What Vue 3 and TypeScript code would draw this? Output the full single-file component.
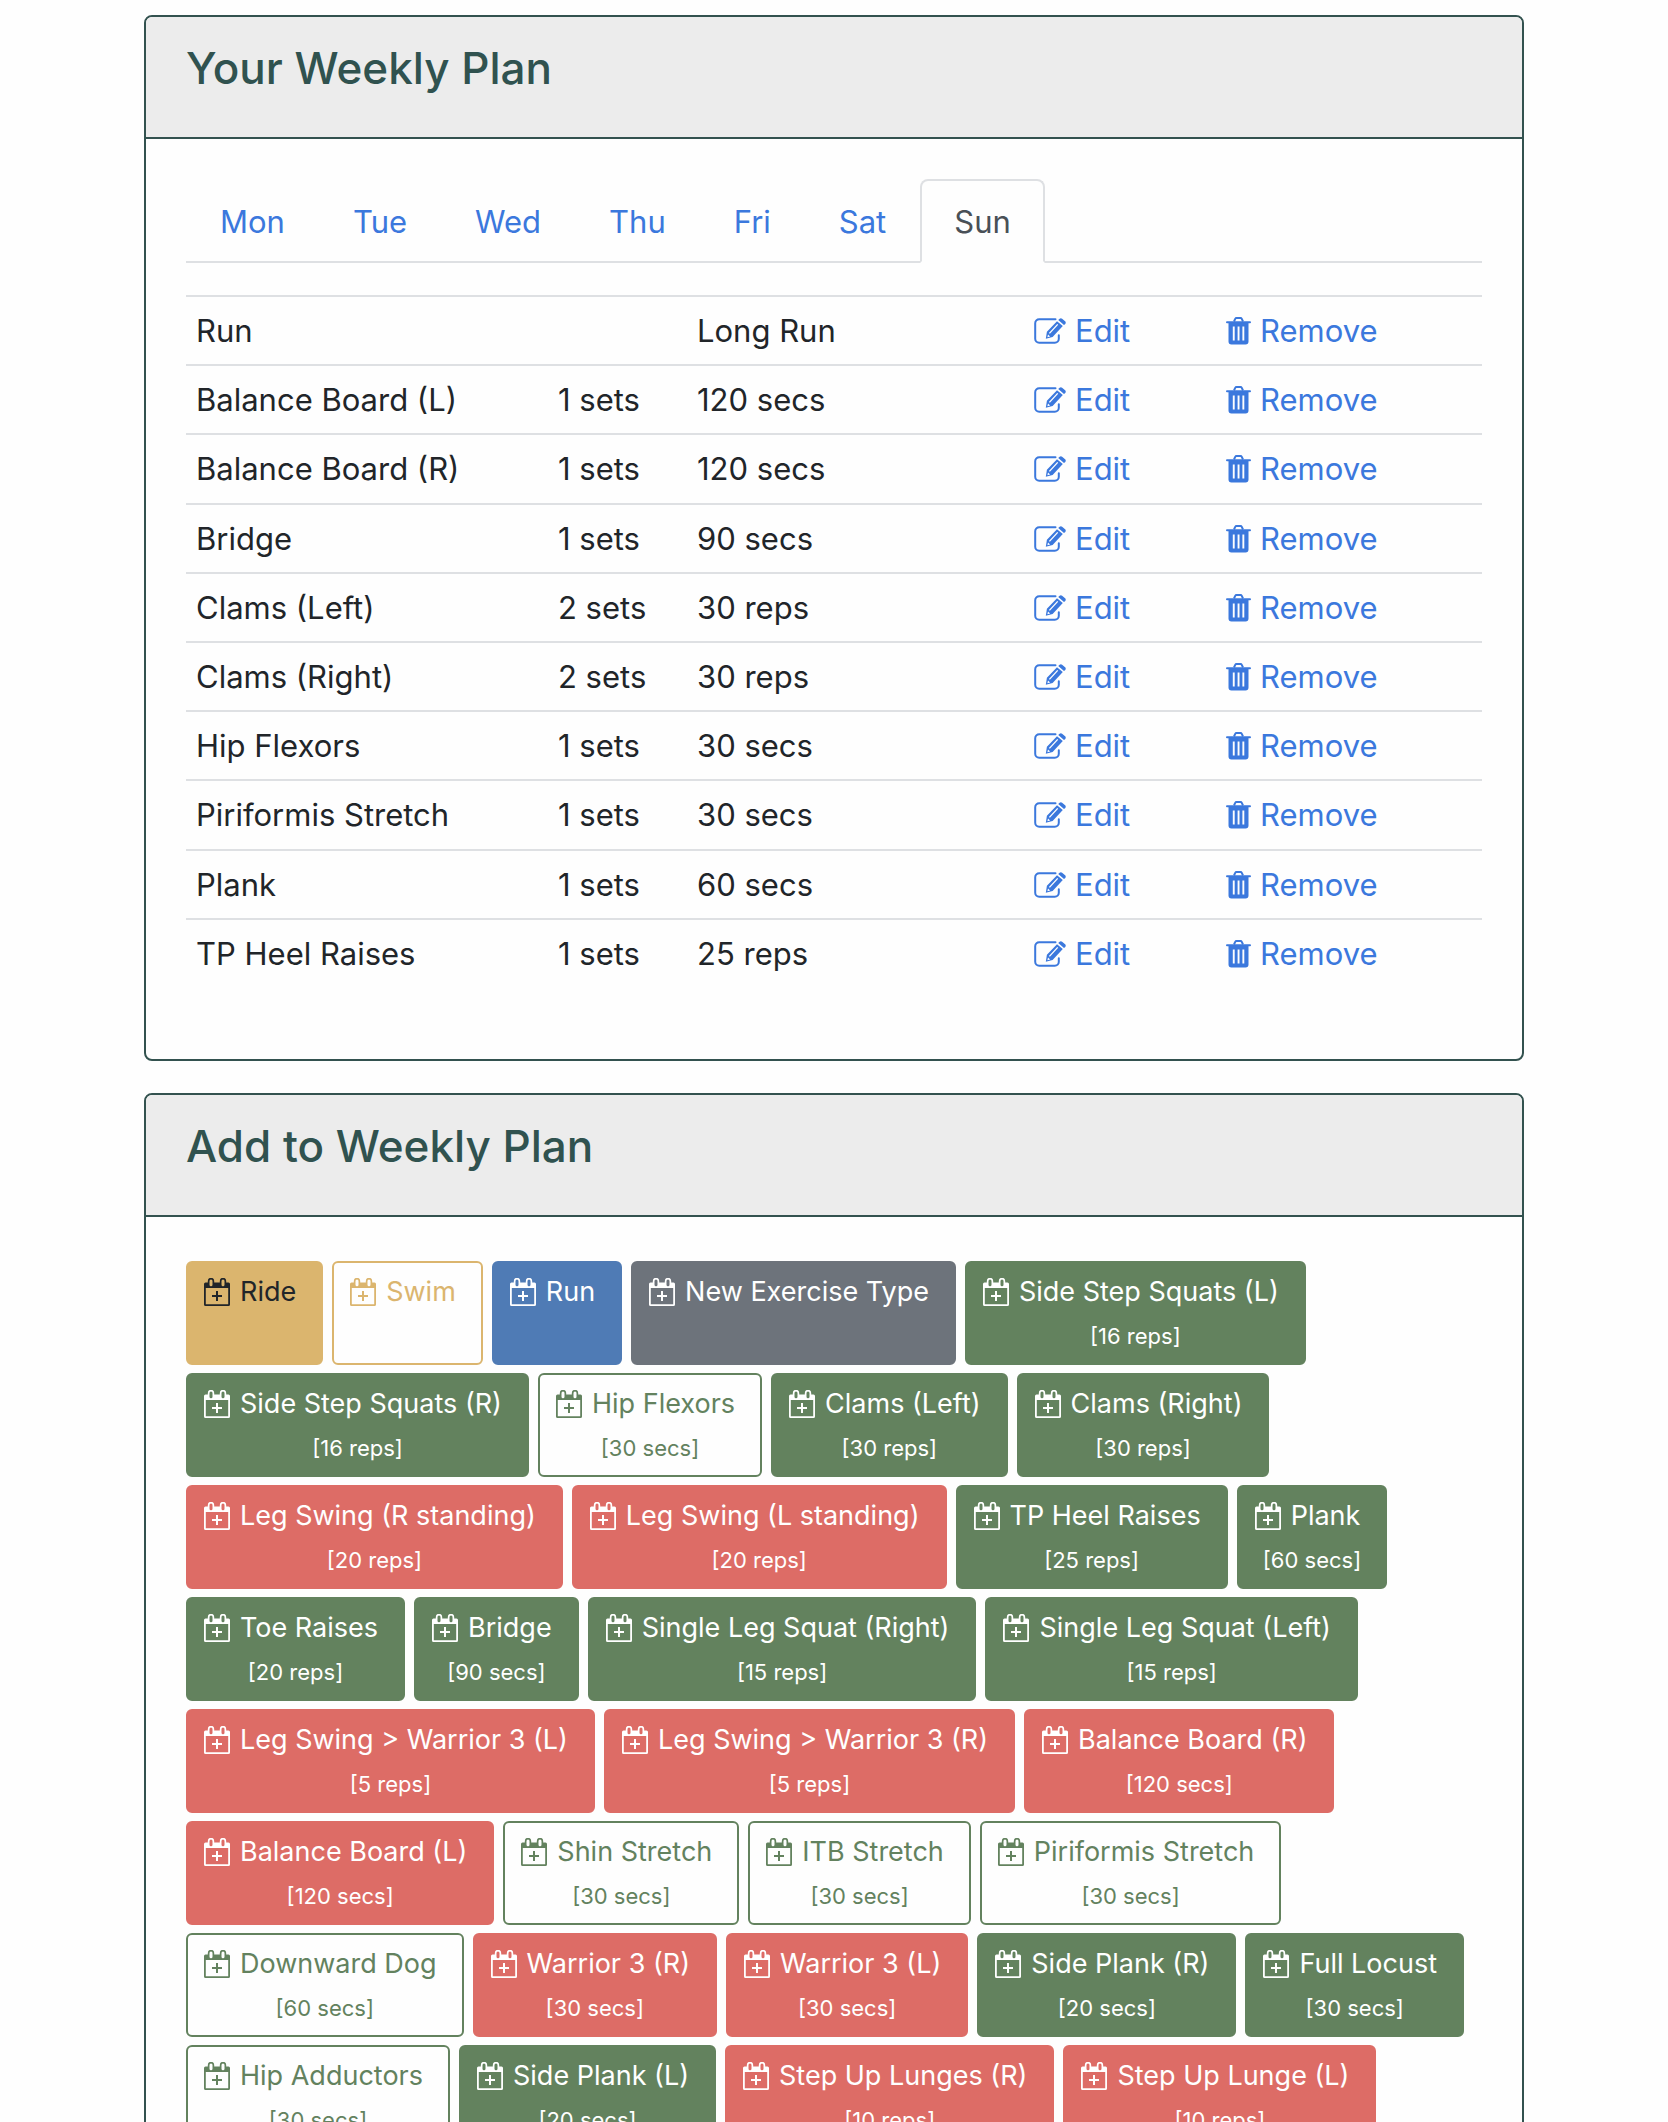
<script setup lang="ts">
import { ref } from 'vue'

interface PlanRow {
  name: string
  sets: string
  amount: string
}

type Tone = 'gold' | 'gold-line' | 'blue' | 'grey' | 'green' | 'green-line' | 'red'

interface Exercise {
  label: string
  amount?: string
  tone: Tone
}

const days = ['Mon', 'Tue', 'Wed', 'Thu', 'Fri', 'Sat', 'Sun']
const activeDay = ref('Sun')

const rows: PlanRow[] = [
  { name: 'Run', sets: '', amount: 'Long Run' },
  { name: 'Balance Board (L)', sets: '1 sets', amount: '120 secs' },
  { name: 'Balance Board (R)', sets: '1 sets', amount: '120 secs' },
  { name: 'Bridge', sets: '1 sets', amount: '90 secs' },
  { name: 'Clams (Left)', sets: '2 sets', amount: '30 reps' },
  { name: 'Clams (Right)', sets: '2 sets', amount: '30 reps' },
  { name: 'Hip Flexors', sets: '1 sets', amount: '30 secs' },
  { name: 'Piriformis Stretch', sets: '1 sets', amount: '30 secs' },
  { name: 'Plank', sets: '1 sets', amount: '60 secs' },
  { name: 'TP Heel Raises', sets: '1 sets', amount: '25 reps' },
]

const exercises: Exercise[] = [
  { label: 'Ride', tone: 'gold' },
  { label: 'Swim', tone: 'gold-line' },
  { label: 'Run', tone: 'blue' },
  { label: 'New Exercise Type', tone: 'grey' },
  { label: 'Side Step Squats (L)', amount: '16 reps', tone: 'green' },
  { label: 'Side Step Squats (R)', amount: '16 reps', tone: 'green' },
  { label: 'Hip Flexors', amount: '30 secs', tone: 'green-line' },
  { label: 'Clams (Left)', amount: '30 reps', tone: 'green' },
  { label: 'Clams (Right)', amount: '30 reps', tone: 'green' },
  { label: 'Leg Swing (R standing)', amount: '20 reps', tone: 'red' },
  { label: 'Leg Swing (L standing)', amount: '20 reps', tone: 'red' },
  { label: 'TP Heel Raises', amount: '25 reps', tone: 'green' },
  { label: 'Plank', amount: '60 secs', tone: 'green' },
  { label: 'Toe Raises', amount: '20 reps', tone: 'green' },
  { label: 'Bridge', amount: '90 secs', tone: 'green' },
  { label: 'Single Leg Squat (Right)', amount: '15 reps', tone: 'green' },
  { label: 'Single Leg Squat (Left)', amount: '15 reps', tone: 'green' },
  { label: 'Leg Swing > Warrior 3 (L)', amount: '5 reps', tone: 'red' },
  { label: 'Leg Swing > Warrior 3 (R)', amount: '5 reps', tone: 'red' },
  { label: 'Balance Board (R)', amount: '120 secs', tone: 'red' },
  { label: 'Balance Board (L)', amount: '120 secs', tone: 'red' },
  { label: 'Shin Stretch', amount: '30 secs', tone: 'green-line' },
  { label: 'ITB Stretch', amount: '30 secs', tone: 'green-line' },
  { label: 'Piriformis Stretch', amount: '30 secs', tone: 'green-line' },
  { label: 'Downward Dog', amount: '60 secs', tone: 'green-line' },
  { label: 'Warrior 3 (R)', amount: '30 secs', tone: 'red' },
  { label: 'Warrior 3 (L)', amount: '30 secs', tone: 'red' },
  { label: 'Side Plank (R)', amount: '20 secs', tone: 'green' },
  { label: 'Full Locust', amount: '30 secs', tone: 'green' },
  { label: 'Hip Adductors', amount: '30 secs', tone: 'green-line' },
  { label: 'Side Plank (L)', amount: '20 secs', tone: 'green' },
  { label: 'Step Up Lunges (R)', amount: '10 reps', tone: 'red' },
  { label: 'Step Up Lunge (L)', amount: '10 reps', tone: 'red' },
]
</script>

<template>
  <main class="page">
    <section class="card">
      <header class="card-head"><h2>Your Weekly Plan</h2></header>
      <div class="card-body">
        <nav class="tabs" aria-label="Days">
          <a
            v-for="day in days"
            :key="day"
            href="#"
            class="tab"
            :class="{ active: day === activeDay }"
            @click.prevent="activeDay = day"
          >{{ day }}</a>
        </nav>
        <table class="plan">
          <colgroup>
            <col class="c-name" />
            <col class="c-sets" />
            <col class="c-amount" />
            <col class="c-edit" />
            <col />
          </colgroup>
          <tbody>
            <tr v-for="row in rows" :key="row.name">
              <td>{{ row.name }}</td>
              <td>{{ row.sets }}</td>
              <td>{{ row.amount }}</td>
              <td>
                <a href="#" class="action" @click.prevent>
                  <svg class="edit-icon" viewBox="0 0 32 26" aria-hidden="true">
                    <path
                      d="M21.500 1.200H5.200a4 4 0 0 0-4 4v15.600a4 4 0 0 0 4 4h15.600a4 4 0 0 0 4-4v-3.600"
                      fill="none" stroke="currentColor" stroke-width="2" stroke-linecap="round"
                    />
                    <path
                      fill="currentColor" fill-rule="evenodd"
                      d="M23 3.200L28.800 8 18.600 18.900 11.800 20.800 12.900 13.800zM23.200 6L14.900 14.900l1 .8 8.300-8.900zM14 16.600l-.6 2.600 2.700-.8z"
                    />
                    <path fill="currentColor" d="M24.200 2.100L25.600.8c.8-.7 1.700-.7 2.500 0l3 2.500c.8.700.9 1.800.2 2.600L30 7z" />
                  </svg>
                  <span>Edit</span>
                </a>
              </td>
              <td>
                <a href="#" class="action" @click.prevent>
                  <svg class="trash-icon" viewBox="0 0 25 28" aria-hidden="true">
                    <path d="M8 4.500l1.200-2.600a1.500 1.500 0 0 1 1.300-.8h4a1.500 1.500 0 0 1 1.300.8L17 4.500" fill="none" stroke="currentColor" stroke-width="2" />
                    <path fill="currentColor" d="M1 4.200h23a1 1 0 0 1 0 2H1a1 1 0 0 1 0-2z" />
                    <path
                      fill="currentColor" fill-rule="evenodd"
                      d="M2.500 6h20v18.500a3 3 0 0 1-3 3h-14a3 3 0 0 1-3-3zM6.800 9.500v14h1.900v-14zM11.600 9.500v14h1.900v-14zM16.400 9.500v14h1.900v-14z"
                    />
                  </svg>
                  <span>Remove</span>
                </a>
              </td>
            </tr>
          </tbody>
        </table>
      </div>
    </section>

    <section class="card">
      <header class="card-head"><h2>Add to Weekly Plan</h2></header>
      <div class="card-body add-body">
        <button
          v-for="item in exercises"
          :key="item.label"
          type="button"
          class="exercise"
          :class="item.tone"
        >
          <span class="title">
            <svg class="cal-icon" viewBox="0 0 26 28" aria-hidden="true">
              <path
                fill="currentColor" fill-rule="evenodd"
                d="M1.500 4.500H3.800V3a3 3 0 0 1 6.400 0V4.500h5.600V3a3 3 0 0 1 6.400 0V4.500h2.300A1.500 1.500 0 0 1 26 6v20.500a1.500 1.500 0 0 1-1.500 1.500h-23A1.500 1.500 0 0 1 0 26.500V6A1.500 1.500 0 0 1 1.500 4.500zM1.800 10v16.200h22.400V10zM5.500 3v3.700a1.500 1.500 0 0 0 3 0V3a1.500 1.500 0 0 0-3 0zM17.500 3v3.700a1.500 1.500 0 0 0 3 0V3a1.500 1.500 0 0 0-3 0z"
              />
              <path d="M13 13v10M8 18h10" fill="none" stroke="currentColor" stroke-width="2" />
            </svg>
            <span>{{ item.label }}</span>
          </span>
          <small v-if="item.amount">[{{ item.amount }}]</small>
        </button>
      </div>
    </section>
  </main>
</template>

<style>
body {
  margin: 0;
  background: #fefefe;
}
</style>

<style scoped>
.page {
  box-sizing: border-box;
  max-width: 1380px;
  margin: 0 auto;
  padding: 15px 0 32px;
  display: flex;
  flex-direction: column;
  gap: 32px;
  font-family: Inter, "Liberation Sans", sans-serif;
  font-size: 31px;
  line-height: 48px;
  color: #212529;
}
.card {
  border: 2px solid #33524f;
  border-radius: 8px;
  overflow: hidden;
}
.card-head {
  padding: 22px 40px 40px;
  background: #ececec;
  border-bottom: 2px solid #33524f;
}
h2 {
  margin: 0;
  font-size: 44px;
  line-height: 58px;
  font-weight: 500;
  color: #30524f;
}
.card-body {
  padding: 40px 40px 72px;
}
.tabs {
  display: flex;
  border-bottom: 2px solid #dee0e3;
}
.tab {
  margin-bottom: -2px;
  padding: 17px 32px 15px;
  border: 2px solid transparent;
  border-radius: 8px 8px 0 0;
  color: #3b78dd;
  text-decoration: none;
}
.tab.active {
  border-color: #dee0e3 #dee0e3 #fefefe;
  background: #fefefe;
  color: #495057;
}
.plan {
  width: 100%;
  margin-top: 32px;
  border-collapse: separate;
  border-spacing: 0;
  table-layout: fixed;
}
.c-name { width: 362px; }
.c-sets { width: 139px; }
.c-amount { width: 337px; }
.c-edit { width: 192px; }
td {
  padding: 10px 10px 9px;
  border-top: 2px solid #dee0e3;
  white-space: nowrap;
}
tr:nth-child(5n + 3) td {
  padding-bottom: 10px;
}
.action {
  display: inline-flex;
  align-items: center;
  gap: 9px;
  vertical-align: top;
  color: #3b78dd;
  text-decoration: none;
}
.edit-icon {
  width: 32px;
  height: 26px;
}
.trash-icon {
  width: 25px;
  height: 28px;
}
.add-body {
  padding-top: 44px;
  display: flex;
  flex-wrap: wrap;
  gap: 8px 9px;
}
.exercise {
  box-sizing: border-box;
  min-height: 104px;
  padding: 8px 16px 4px;
  display: flex;
  flex-direction: column;
  align-items: center;
  border: 2px solid;
  border-radius: 6px;
  font-family: inherit;
  font-size: 27px;
  line-height: 42px;
  white-space: nowrap;
  cursor: pointer;
}
.title {
  display: flex;
  align-items: center;
  gap: 10px;
  padding-right: 9px;
}
.cal-icon {
  width: 26px;
  height: 28px;
}
small {
  font-size: 22px;
  line-height: 46px;
}
.gold {
  background: #dbb56e;
  border-color: #dbb56e;
  color: #212529;
}
.gold-line {
  background: #fefefe;
  border-color: #dbb56e;
  color: #dbb56e;
}
.blue {
  background: #4f7bb5;
  border-color: #4f7bb5;
  color: #fff;
}
.grey {
  background: #6d737b;
  border-color: #6d737b;
  color: #fff;
}
.green {
  background: #63825e;
  border-color: #63825e;
  color: #fff;
}
.green-line {
  background: #fefefe;
  border-color: #63825e;
  color: #63825e;
}
.red {
  background: #dd6c66;
  border-color: #dd6c66;
  color: #fff;
}
</style>
